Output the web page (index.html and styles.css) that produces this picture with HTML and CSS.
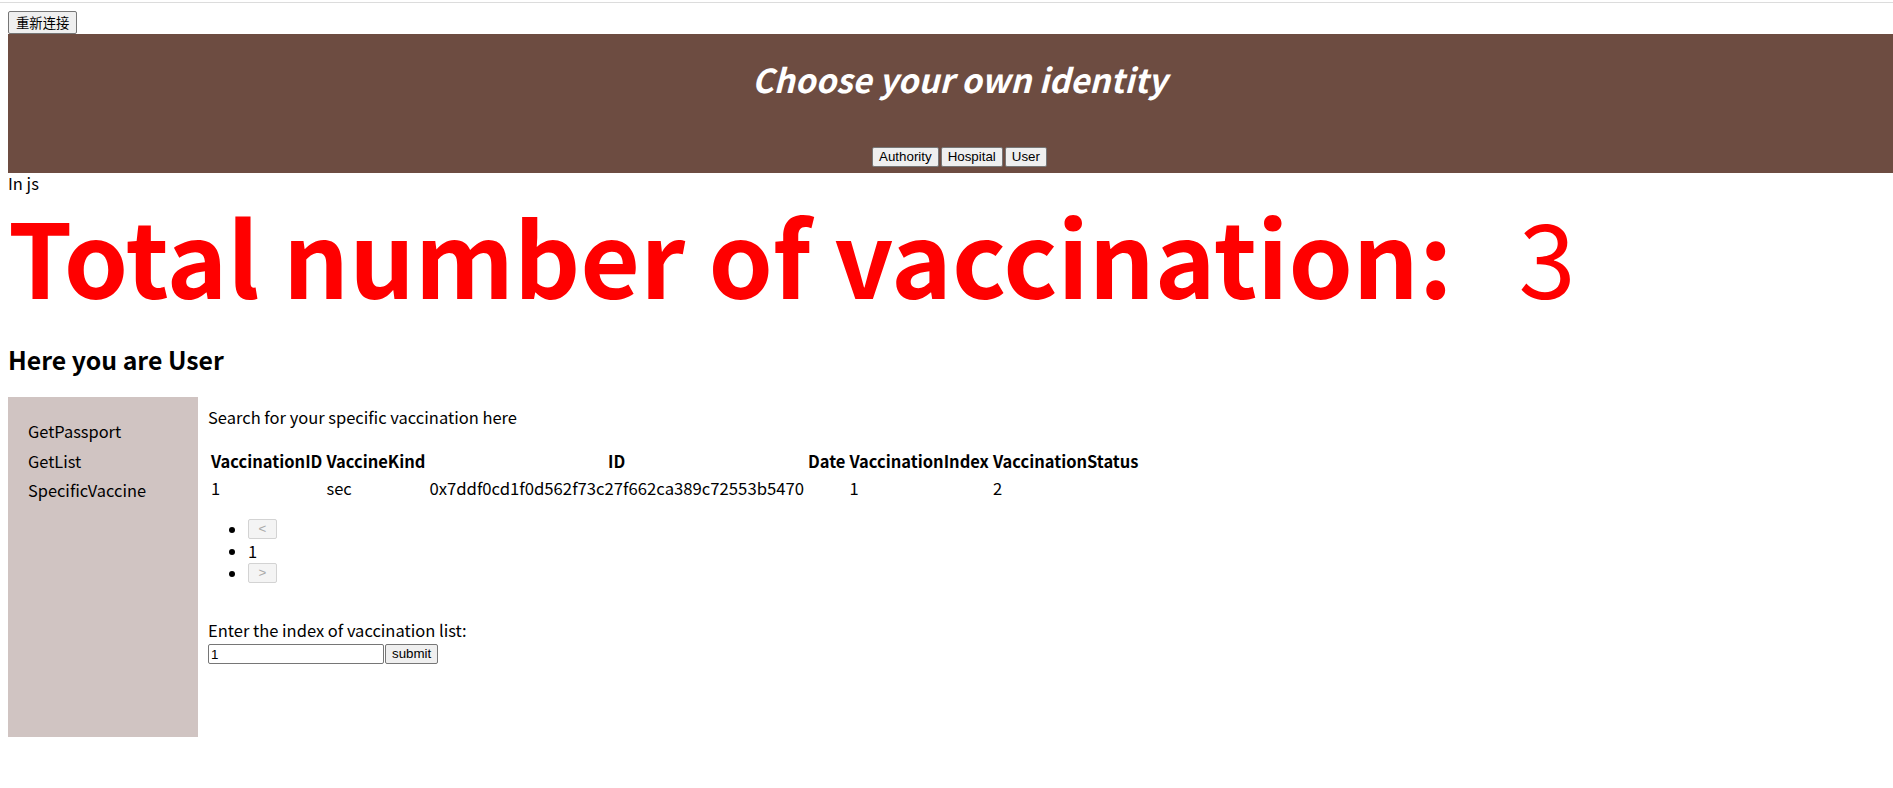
FILE: index.html
```html
<!DOCTYPE html>
<html lang="en">
<head>
<meta charset="utf-8">
<title>Vaccination</title>
<link rel="stylesheet" href="styles.css">
</head>
<body>
<div class="topline"></div>
<div class="page">
  <button class="btn reconnect">重新连接</button>
  <header class="header">
    <h1 class="title">Choose your own identity</h1>
    <div class="roles">
      <button class="btn">Authority</button>
      <button class="btn">Hospital</button>
      <button class="btn">User</button>
    </div>
  </header>
  <div class="injs">In js</div>
  <h1 class="total">Total number of vaccination:<span class="count">3</span></h1>
  <h2 class="greet">Here you are User</h2>
  <div class="layout">
    <nav class="sidebar">
      <ul class="menu">
        <li>GetPassport</li>
        <li>GetList</li>
        <li>SpecificVaccine</li>
      </ul>
    </nav>
    <main class="main">
      <div class="search">Search for your specific vaccination here</div>
      <table class="vtable">
        <thead>
          <tr><th>VaccinationID</th><th>VaccineKind</th><th>ID</th><th>Date</th><th>VaccinationIndex</th><th>VaccinationStatus</th></tr>
        </thead>
        <tbody>
          <tr><td>1</td><td>sec</td><td class="hash">0x7ddf0cd1f0d562f73c27f662ca389c72553b5470</td><td></td><td>1</td><td>2</td></tr>
        </tbody>
      </table>
      <ul class="pager">
        <li><button class="btn pbtn" disabled>&lt;</button></li>
        <li>1</li>
        <li><button class="btn pbtn" disabled>&gt;</button></li>
      </ul>
      <div class="label">Enter the index of vaccination list:</div>
      <div class="form">
        <input class="input" type="text" value="1">
        <button class="btn">submit</button>
      </div>
    </main>
  </div>
</div>
</body>
</html>
```
FILE: styles.css
```css
html, body {
  margin: 0;
  background: #fff;
}
body {
  font-family: "Noto Sans CJK SC", "Noto Sans", sans-serif;
  font-size: 16.5px;
  line-height: 21px;
  color: #000;
}
.topline {
  margin-top: 2px;
  height: 1px;
  background: #dcdcdc;
}
.page {
  padding-left: 8px;
}
.btn {
  font-family: "Liberation Sans", Arial, sans-serif;
  font-size: 13.33px;
  height: 20px;
  line-height: 18px;
  padding: 0 6px;
  border: 1px solid #767676;
  border-radius: 2px;
  background: #efefef;
  color: #000;
  box-sizing: border-box;
  margin: 0;
}
.reconnect {
  display: block;
  margin-top: 8px;
  height: 23px;
  line-height: 21px;
  padding: 0 7px;
  font-family: "Noto Sans CJK SC", sans-serif;
}
.header {
  background: #6d4c41;
  height: 139px;
  box-sizing: border-box;
  padding: 25px 0 6px 18px;
  display: flex;
  flex-direction: column;
  align-items: center;
}
.title {
  margin: 0;
  font-size: 33px;
  line-height: 40px;
  font-weight: 700;
  font-style: italic;
  color: #fff;
}
.roles {
  margin-top: 48px;
  display: flex;
  gap: 2px;
}
.injs {
  line-height: 21px;
}
.total {
  margin: 1px 0 0;
  font-size: 103px;
  line-height: 120px;
  font-weight: 700;
  color: #ff0000;
  white-space: nowrap;
}
.count {
  font-weight: 400;
  margin-left: 66px;
}
.greet {
  margin: 29px 0 0;
  font-size: 24.8px;
  line-height: 30px;
  font-weight: 700;
}
.layout {
  margin-top: 23px;
  display: flex;
  align-items: flex-start;
}
.sidebar {
  flex: none;
  width: 190px;
  height: 340px;
  background: #d0c4c2;
}
.menu {
  list-style: none;
  margin: 0;
  padding: 20px 0 0 20px;
  font-size: 16.4px;
  line-height: 29.5px;
}
.main {
  padding: 10px 0 0 10px;
}
.search {
  line-height: 21px;
}
.vtable {
  margin-top: 19px;
  border-collapse: separate;
  border-spacing: 2px;
  font-size: 16.5px;
  line-height: 23px;
}
.vtable th,
.vtable td {
  padding: 1px;
}
.vtable th {
  font-weight: 700;
  text-align: center;
}
.vtable td {
  text-align: left;
}
.vtable .hash {
  font-size: 16.7px;
}
.pager {
  margin: 15px 0 36px;
  padding-left: 40px;
}
.pager li {
  height: 22px;
  line-height: 22px;
}
.pbtn {
  width: 29px;
  vertical-align: top;
  margin-top: 1px;
  background: #f4f4f4;
  border-color: #d3d3d3;
  color: #a9a9a9;
}
.label {
  line-height: 21px;
}
.form {
  display: flex;
  gap: 1px;
  margin-top: 3px;
}
.input {
  width: 176px;
  height: 20px;
  box-sizing: border-box;
  margin: 0;
  padding: 1px 2px;
  border: 1px solid #767676;
  border-radius: 2px;
  font-family: "Liberation Sans", Arial, sans-serif;
  font-size: 13.33px;
  color: #000;
}
```
